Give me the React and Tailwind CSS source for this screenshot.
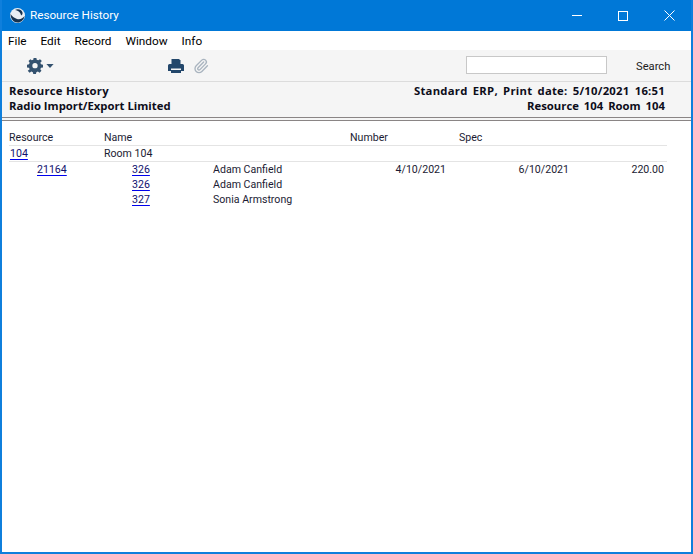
import React from "react";
import { Paperclip } from "lucide-react";

function Link({ children }) {
  return <a className="text-[#10106e] underline decoration-[#0000ee] underline-offset-2">{children}</a>;
}

function DetailRow({ order, code, name, from, to, amount }) {
  return (
    <div className="flex h-[15px] items-center leading-[15px]">
      <div className="w-[28px]" />
      <div className="w-[95px]">{order && <Link>{order}</Link>}</div>
      <div className="w-[81px]"><Link>{code}</Link></div>
      <div className="w-[120px]">{name}</div>
      <div className="w-[113px] text-right">{from}</div>
      <div className="w-[123px] text-right">{to}</div>
      <div className="w-[95px] text-right">{amount}</div>
    </div>
  );
}

export default function App() {
  return (
    <div className="flex h-[554px] w-[693px] flex-col overflow-hidden border-x-2 border-b-2 border-[#0f7fdc] bg-white font-['Roboto','Noto_Sans',sans-serif] text-[10.6px] text-[#1b1b33]">
      <div className="-mx-[2px] flex h-[31px] shrink-0 items-center bg-[#0078d7] pl-[9px] text-white">
        <svg width="17" height="17" viewBox="0 0 17 17">
          <circle cx="8.5" cy="8.5" r="7.5" fill="#e8eef4" />
          <path d="M1.500 7C3 9 5 11 8 12c3 .8 6-.5 7.500-3-.500 4-3.500 6.500-7 6.500S1.500 12 1.500 7Z" fill="#16324f" />
          <path d="M6 3c3-1.500 6.500-.5 7.500 2.500.3 1.500-.5 2.500-1.500 3 0-2.500-2.500-5-6-5.500Z" fill="#16324f" />
        </svg>
        <span className="ml-[4px] pt-px text-[11.7px]">Resource History</span>
        <div className="ml-auto flex items-center pr-px">
          <div className="flex h-[31px] w-[46px] items-center justify-center">
            <div className="h-px w-[10px] bg-white" />
          </div>
          <div className="flex h-[31px] w-[46px] items-center justify-center">
            <div className="h-[10px] w-[10px] border border-white" />
          </div>
          <div className="flex h-[31px] w-[46px] items-center justify-center">
            <svg width="11" height="11" viewBox="0 0 11 11" stroke="white" strokeWidth="1">
              <path d="M.500.500l10 10M10.500.500l-10 10" />
            </svg>
          </div>
        </div>
      </div>

      <div className="flex h-[19px] shrink-0 items-center gap-[14px] pl-[6px] pt-[2px] text-[11.8px] text-black">
        <span>File</span><span>Edit</span><span>Record</span><span>Window</span><span>Info</span>
      </div>

      <div className="flex h-[32px] shrink-0 items-center border-b border-[#dcdcdc] bg-[#f5f5f5]">
        <svg className="ml-[25px] mt-px" width="16" height="16" viewBox="0 0 24 24" fill="#34526f">
          <path fillRule="evenodd" d="M10 1h4l.6 3 2.300 1 2.600-1.700 2.800 2.800L20 8.700l1 2.300 3 .6v4l-3 .4-1 2.300 1.700 2.500-2.800 2.800-2.600-1.700-2.300 1-.6 2.600h-4l-.6-2.600-2.300-1-2.600 1.700-2.800-2.800L4 18.300 3 16l-3-.4v-4l3-.6 1-2.300-1.700-2.600 2.800-2.800L7.100 5l2.300-1L10 1Zm2 8a4 4 0 1 0 0 8 4 4 0 0 0 0-8Z" transform="translate(0 -1.500)" />
        </svg>
        <svg className="ml-[3px]" width="8" height="4" viewBox="0 0 9 5"><path d="M0 0h9L4.500 5Z" fill="#34526f" /></svg>
        <svg className="ml-[114px] mt-px" width="16" height="14" viewBox="0 0 16 14" fill="#23476b">
          <path d="M3.500 0H11l1.500 1.500V5h-9Z" />
          <path fillRule="evenodd" d="M1.500 5h13A1.500 1.500 0 0 1 16 6.500V12h-3v2H3v-2H0V6.500A1.500 1.500 0 0 1 1.500 5ZM3 9.500V11h10V9.500Z" />
        </svg>
        <Paperclip className="ml-[9px] mt-px" size={16} color="#a9b4bf" strokeWidth={2} />
        <div className="mb-[2px] ml-[257px] h-[18px] w-[141px] border border-[#c8c8c8] bg-white" />
        <span className="ml-[29px] pt-[4px] text-[11.2px] text-[#1c1c1c]">Search</span>
      </div>

      <div className="flex h-[36px] shrink-0 flex-col border-b border-[#8a8585] bg-[#f5f5f5] pl-[7px] pr-[26px] pt-[1px] font-['Open_Sans',sans-serif] text-[11.3px] font-bold leading-[15px] text-[#0d0d1a]">
        <div className="flex justify-between"><span className="tracking-[0.25px]">Resource History</span><span className="tracking-[0.25px] [word-spacing:2px]">Standard ERP, Print date: 5/10/2021 16:51</span></div>
        <div className="flex justify-between"><span>Radio Import/Export Limited</span><span className="[word-spacing:2px]">Resource 104 Room 104</span></div>
      </div>
      <div className="h-[3px] shrink-0 border-b border-[#8a8585] bg-[#f5f5f5]" />

      <div className="ml-[7px] mt-[8px] w-[658px]">
        <div className="flex h-[17px] items-center border-b border-[#e4e4e4] leading-[15px]">
          <div className="w-[95px]">Resource</div>
          <div className="w-[246px]">Name</div>
          <div className="w-[109px]">Number</div>
          <div>Spec</div>
        </div>
        <div className="flex h-[16px] items-center border-b border-[#e4e4e4] leading-[15px]">
          <div className="w-[95px] pl-px"><Link>104</Link></div>
          <div>Room 104</div>
        </div>
        <DetailRow order="21164" code="326" name="Adam Canfield" from="4/10/2021" to="6/10/2021" amount="220.00" />
        <DetailRow code="326" name="Adam Canfield" />
        <DetailRow code="327" name="Sonia Armstrong" />
      </div>
    </div>
  );
}
